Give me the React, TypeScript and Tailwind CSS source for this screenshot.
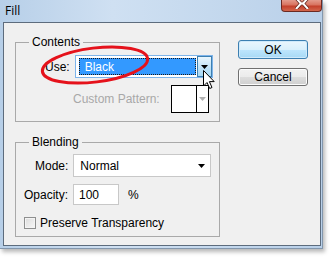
const FONT = "font-['Liberation_Sans',Arial,sans-serif]";

function DownArrow({ color = "#000" }: { color?: string }) {
  return (
    <svg width="7" height="4" viewBox="0 0 7 4">
      <path d="M0 0 H7 L3.5 4 Z" fill={color} />
    </svg>
  );
}

function WinButton({ label, primary = false, h }: { label: string; primary?: boolean; h: string }) {
  return (
    <div
      className={`w-[70px] ${h} rounded-[3px] border flex items-center justify-center text-[12px] text-black ${
        primary
          ? "border-[#3c7fb1] bg-[linear-gradient(#eaf6fd_0%,#d9f0fc_50%,#bee6fd_51%,#a7d9f5_100%)] shadow-[inset_0_0_0_1px_#cfeafb]"
          : "border-[#707070] bg-[linear-gradient(#f2f2f2_0%,#ebebeb_50%,#dddddd_51%,#cfcfcf_100%)] shadow-[inset_0_0_0_1px_#fcfcfc]"
      }`}
    >
      {label}
    </div>
  );
}

export default function App() {
  return (
    <div className={`relative w-[330px] h-[257px] bg-white overflow-hidden ${FONT}`}>
      {/* window frame */}
      <div className="w-[323px] h-[249px] flex flex-col pl-[3px] pr-[1px] pb-[2px] border-r border-b border-[#8397ad] bg-[linear-gradient(90deg,#b7cfe8_0%,#cfe0f2_35%,#c5d9ee_65%,#b9d0e9_100%)] shadow-[2px_3px_4px_rgba(0,0,0,0.28)]">
        {/* title bar */}
        <div className="h-[22px] flex items-start justify-between">
          <span className="pl-[2px] pt-[3px] text-[12px] leading-[15px] text-black font-['Open_Sans',sans-serif]">Fill</span>
          <div className="w-[41px] h-[12px] -mr-[1px] rounded-b-[4px] border border-t-0 border-[#6b2a22] bg-[linear-gradient(#e49b8c_0%,#d8735f_45%,#c4402b_55%,#d2664c_100%)] flex justify-center items-start">
            <svg width="14" height="9" viewBox="0 0 14 9">
              <path d="M1 -2 L6 3.5 L1 9 M13 -2 L8 3.5 L13 9" stroke="#5a1f16" strokeWidth="3.4" fill="none" />
              <path d="M1 -2 L6 3.5 L1 9 M13 -2 L8 3.5 L13 9" stroke="#fff" strokeWidth="2" fill="none" />
              <path d="M5.5 3.5 H8.5" stroke="#fff" strokeWidth="2" />
            </svg>
          </div>
        </div>

        {/* client area */}
        <div className="flex-1 border border-[#5d6c7d] bg-[#f0f0f0] flex items-start pl-[11px] pt-[12px] text-[12px] text-black">
          <div className="flex flex-col w-[205px]">
            {/* Contents */}
            <fieldset className="border border-[#a9a9a9] pb-[8px]">
              <legend className="ml-[13px] px-[3px] leading-[14px]">Contents</legend>
              <div className="mt-[6px] ml-[29px] flex items-center gap-[5px]">
                <span>Use:</span>
                <div className="w-[138px] h-[23px] border border-[#7eb4ea] bg-white flex items-stretch">
                  <div className="flex-1 my-[2px] ml-[3px] mr-[1px] bg-[#3399ff] border border-dotted border-[#1a1a1a] flex items-center pl-[5px] text-white">
                    Black
                  </div>
                  <div className="w-[15px] border border-[#3c7fb1] bg-[linear-gradient(#eaf6fd,#c0e2f7_55%,#a7d9f5)] flex items-center justify-center">
                    <DownArrow />
                  </div>
                </div>
              </div>
              <div className="mt-[7px] ml-[57px] flex items-center gap-[11px]">
                <span className="text-[#a8a8a8]">Custom Pattern:</span>
                <div className="w-[38px] h-[28px] border border-black bg-white flex">
                  <div className="w-[25px] border-r border-black" />
                  <div className="flex-1 flex items-center justify-center">
                    <DownArrow color="#b0b0b0" />
                  </div>
                </div>
              </div>
            </fieldset>

            {/* Blending */}
            <fieldset className="mt-[13px] border border-[#a9a9a9] pb-[4px]">
              <legend className="ml-[13px] px-[3px] leading-[14px]">Blending</legend>
              <div className="mt-[5px] ml-[19px] flex items-center gap-[5px]">
                <span>Mode:</span>
                <div className="w-[138px] h-[23px] border border-[#c8c8c8] bg-white flex items-center justify-between pl-[6px] pr-[5px]">
                  <span>Normal</span>
                  <DownArrow />
                </div>
              </div>
              <div className="mt-[7px] ml-[8px] flex items-center gap-[5px]">
                <span>Opacity:</span>
                <div className="w-[46px] h-[21px] border border-[#c8c8c8] bg-white flex items-center pl-[5px]">100</div>
                <span className="ml-[4px]">%</span>
              </div>
              <div className="mt-[9px] ml-[8px] flex items-center gap-[4px]">
                <div className="w-[12px] h-[12px] border border-[#8e8f8f] bg-[linear-gradient(135deg,#dcdcdc,#f8f8f8)] shadow-[inset_0_0_0_1px_#f4f4f4]" />
                <span>Preserve Transparency</span>
              </div>
            </fieldset>
          </div>

          {/* buttons */}
          <div className="ml-[18px] mt-[5px] flex flex-col gap-[9px]">
            <WinButton label="OK" primary h="h-[19px]" />
            <WinButton label="Cancel" h="h-[18px]" />
          </div>
        </div>
      </div>

      {/* red annotation ellipse */}
      <svg className="absolute left-0 top-0 pointer-events-none" width="330" height="257">
        <ellipse cx="95" cy="65" rx="53" ry="17" transform="rotate(-7 95 65)" fill="none" stroke="#e5121b" strokeWidth="3" />
      </svg>

      {/* mouse cursor */}
      <svg className="absolute left-[203px] top-[70px] pointer-events-none" width="13" height="20" viewBox="0 0 13 20">
        <path d="M0.5 0.5 V16 L4 12.5 L6.7 18.5 L9 17.5 L6.4 11.6 H11.2 Z" fill="#fff" stroke="#000" strokeWidth="1" strokeLinejoin="round" />
      </svg>
    </div>
  );
}
